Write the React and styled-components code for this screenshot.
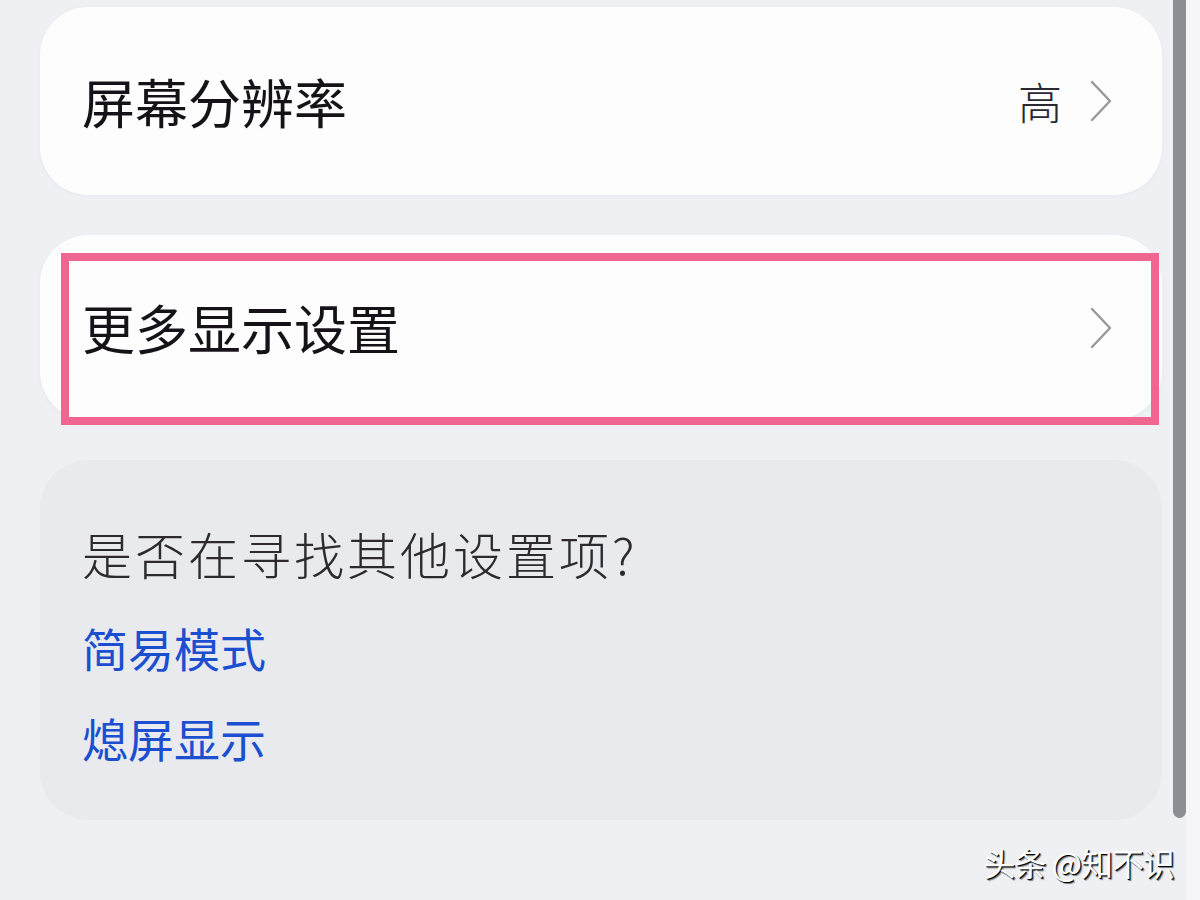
import React from "react";
import styled, { createGlobalStyle } from "styled-components";

const Global = createGlobalStyle`
  html, body { margin: 0; padding: 0; background: #eef0f4; }
  body { font-family: "Noto Sans CJK SC", "Noto Sans", sans-serif; }
`;

const Page = styled.div`
  position: relative;
  width: 1200px;
  height: 900px;
  overflow: hidden;
  background: #eef0f4;
`;

const Column = styled.div`
  display: flex;
  flex-direction: column;
  gap: 40px;
  width: 1122px;
  padding: 7px 0 0 40px;
`;

const Card = styled.div`
  position: relative;
  display: flex;
  align-items: center;
  justify-content: space-between;
  box-sizing: border-box;
  height: ${(p) => p.$h}px;
  padding: 0 50px 0 42px;
  border-radius: 48px;
  background: #fdfdfe;
  box-shadow: 0 1px 3px rgba(200, 204, 214, 0.25);
`;

const Title = styled.span`
  font-size: 53px;
  font-weight: 400;
  color: #151318;
  line-height: 1;
`;

const Trail = styled.div`
  display: flex;
  align-items: center;
  gap: 28px;
`;

const Value = styled.span`
  font-size: 44px;
  font-weight: 300;
  color: #2a2830;
  line-height: 1;
`;

const Highlight = styled.div`
  position: absolute;
  left: 21px;
  top: 18px;
  width: 1098px;
  height: 172px;
  box-sizing: border-box;
  border: 8px solid #ef6791;
  pointer-events: none;
`;

const HintCard = styled.div`
  display: flex;
  flex-direction: column;
  align-items: flex-start;
  box-sizing: border-box;
  height: 360px;
  padding: 63px 0 0 42px;
  border-radius: 48px;
  background: #e8eaee;
`;

const Question = styled.div`
  font-size: 50px;
  font-weight: 300;
  letter-spacing: 3px;
  line-height: 60px;
  color: #2c2a30;
  margin-bottom: 34px;
`;

const LinkText = styled.div`
  font-size: 46px;
  letter-spacing: 0;
  line-height: 60px;
  color: #1b4fcf;
  font-weight: 400;
  margin-bottom: 30px;
`;

const Scrollbar = styled.div`
  position: absolute;
  top: 0;
  left: 1173px;
  width: 13px;
  height: 818px;
  background: #8d8e93;
  border-radius: 0 0 7px 7px;
`;

const EdgeStrip = styled.div`
  position: absolute;
  top: 0;
  right: 0;
  width: 14px;
  height: 900px;
  background: #f6f6f9;
`;

const Watermark = styled.div`
  position: absolute;
  right: 26px;
  bottom: 22px;
  font-size: 32px;
  color: #ffffff;
  line-height: 1;
  text-shadow: 1px 1px 0 #000, 2px 2px 1px rgba(0,0,0,0.5);
  letter-spacing: -1px;
`;

const Chevron = () => (
  <svg width="22" height="42" viewBox="0 0 22 42">
    <path d="M2 2 L20 21 L2 40" fill="none" stroke="#98979c" strokeWidth="2.4" strokeLinejoin="round" strokeLinecap="round" />
  </svg>
);

export default function App() {
  return (
    <Page>
      <Global />
      <EdgeStrip />
      <Column>
        <Card $h={188}>
          <Title>屏幕分辨率</Title>
          <Trail>
            <Value>高</Value>
            <Chevron />
          </Trail>
        </Card>
        <Card $h={185}>
          <Title>更多显示设置</Title>
          <Chevron />
          <Highlight />
        </Card>
        <HintCard>
          <Question>是否在寻找其他设置项?</Question>
          <LinkText>简易模式</LinkText>
          <LinkText>熄屏显示</LinkText>
        </HintCard>
      </Column>
      <Scrollbar />
      <Watermark>头条 @知不识</Watermark>
    </Page>
  );
}
